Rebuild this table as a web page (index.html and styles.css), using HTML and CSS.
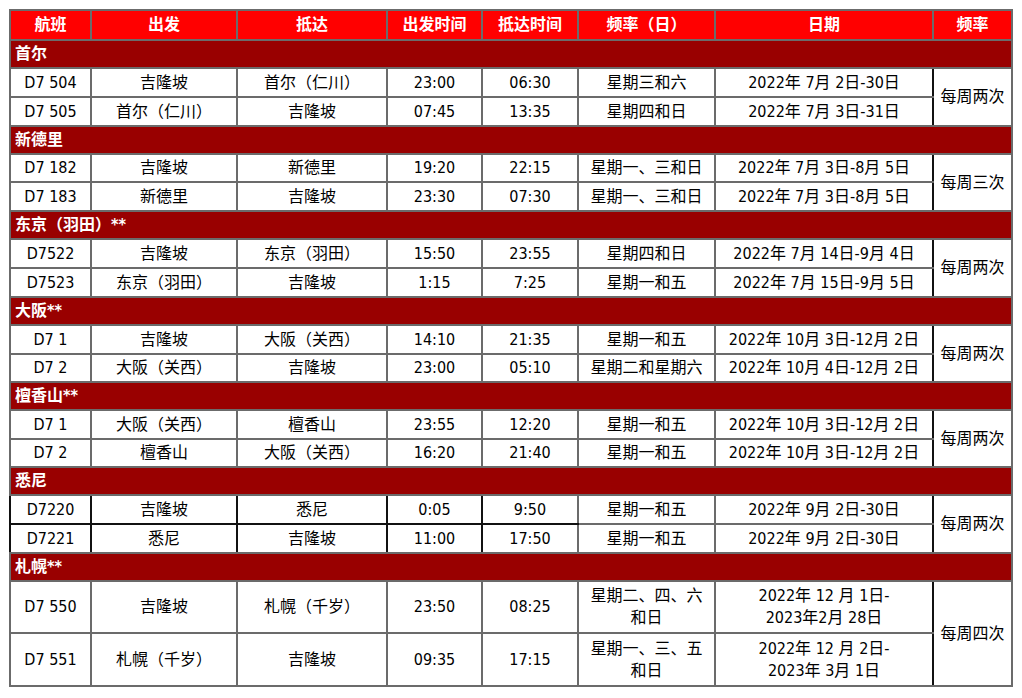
FILE: index.html
```html
<!DOCTYPE html>
<html lang="zh-CN">
<head>
<meta charset="utf-8">
<title>航班时刻表</title>
<link rel="stylesheet" href="styles.css">
</head>
<body>
<table class="sched">
  <colgroup>
    <col class="c1"><col class="c2"><col class="c3"><col class="c4"><col class="c5"><col class="c6"><col class="c7"><col class="c8">
  </colgroup>
  <thead>
    <tr class="head">
      <th>航班</th><th>出发</th><th>抵达</th><th>出发时间</th><th>抵达时间</th><th>频率（日）</th><th>日期</th><th>频率</th>
    </tr>
  </thead>
  <tbody>
    <tr class="grp"><td colspan="8">首尔</td></tr>
    <tr class="row r29"><td>D7 504</td><td>吉隆坡</td><td>首尔（仁川）</td><td>23:00</td><td>06:30</td><td>星期三和六</td><td class="date">2022年 7月 2日-30日</td><td class="freq" rowspan="2">每周两次</td></tr>
    <tr class="row r29"><td>D7 505</td><td>首尔（仁川）</td><td>吉隆坡</td><td>07:45</td><td>13:35</td><td>星期四和日</td><td class="date">2022年 7月 3日-31日</td></tr>

    <tr class="grp"><td colspan="8">新德里</td></tr>
    <tr class="row r28"><td>D7 182</td><td>吉隆坡</td><td>新德里</td><td>19:20</td><td>22:15</td><td>星期一、三和日</td><td class="date">2022年 7月 3日-8月 5日</td><td class="freq" rowspan="2">每周三次</td></tr>
    <tr class="row r29"><td>D7 183</td><td>新德里</td><td>吉隆坡</td><td>23:30</td><td>07:30</td><td>星期一、三和日</td><td class="date">2022年 7月 3日-8月 5日</td></tr>

    <tr class="grp"><td colspan="8">东京（羽田）**</td></tr>
    <tr class="row r29"><td>D7522</td><td>吉隆坡</td><td>东京（羽田）</td><td>15:50</td><td>23:55</td><td>星期四和日</td><td class="date">2022年 7月 14日-9月 4日</td><td class="freq" rowspan="2">每周两次</td></tr>
    <tr class="row r29"><td>D7523</td><td>东京（羽田）</td><td>吉隆坡</td><td>1:15</td><td>7:25</td><td>星期一和五</td><td class="date">2022年 7月 15日-9月 5日</td></tr>

    <tr class="grp"><td colspan="8">大阪**</td></tr>
    <tr class="row r29"><td>D7 1</td><td>吉隆坡</td><td>大阪（关西）</td><td>14:10</td><td>21:35</td><td>星期一和五</td><td class="date">2022年 10月 3日-12月 2日</td><td class="freq" rowspan="2">每周两次</td></tr>
    <tr class="row r28"><td>D7 2</td><td>大阪（关西）</td><td>吉隆坡</td><td>23:00</td><td>05:10</td><td>星期二和星期六</td><td class="date">2022年 10月 4日-12月 2日</td></tr>

    <tr class="grp"><td colspan="8">檀香山**</td></tr>
    <tr class="row r29"><td>D7 1</td><td>大阪（关西）</td><td>檀香山</td><td>23:55</td><td>12:20</td><td>星期一和五</td><td class="date">2022年 10月 3日-12月 2日</td><td class="freq" rowspan="2">每周两次</td></tr>
    <tr class="row r28"><td>D7 2</td><td>檀香山</td><td>大阪（关西）</td><td>16:20</td><td>21:40</td><td>星期一和五</td><td class="date">2022年 10月 3日-12月 2日</td></tr>

    <tr class="grp"><td colspan="8">悉尼</td></tr>
    <tr class="row r29 syd syd1"><td>D7220</td><td>吉隆坡</td><td>悉尼</td><td>0:05</td><td>9:50</td><td>星期一和五</td><td class="date">2022年 9月 2日-30日</td><td class="freq" rowspan="2">每周两次</td></tr>
    <tr class="row r29 syd syd2"><td>D7221</td><td>悉尼</td><td>吉隆坡</td><td>11:00</td><td>17:50</td><td>星期一和五</td><td class="date">2022年 9月 2日-30日</td></tr>

    <tr class="grp"><td colspan="8">札幌**</td></tr>
    <tr class="row tall"><td>D7 550</td><td>吉隆坡</td><td>札幌（千岁）</td><td>23:50</td><td>08:25</td><td>星期二、四、六<br>和日</td><td class="date">2022年 12 月 1日-<br>2023年2月 28日</td><td class="freq" rowspan="2">每周四次</td></tr>
    <tr class="row tall2"><td>D7 551</td><td>札幌（千岁）</td><td>吉隆坡</td><td>09:35</td><td>17:15</td><td>星期一、三、五<br>和日</td><td class="date">2022年 12 月 2日-<br>2023年 3月 1日</td></tr>
  </tbody>
</table>
</body>
</html>
```
FILE: styles.css
```css
html, body {
  margin: 0;
  padding: 0;
  background: #ffffff;
}

body {
  font-family: "DejaVu Sans Condensed", "DejaVu Sans", "Noto Sans CJK SC", sans-serif;
  font-stretch: condensed;
  font-size: 16px;
  color: #000000;
}

.sched {
  margin: 9px 0 0 9px;
  width: 1004px;
  table-layout: fixed;
  border-collapse: collapse;
  border: 2px solid #6b6b6b;
}

.c1 { width: 81px; }
.c2 { width: 146px; }
.c3 { width: 150px; }
.c4 { width: 95px; }
.c5 { width: 96px; }
.c6 { width: 137px; }
.c7 { width: 218px; }
.c8 { width: 79px; }

.sched th,
.sched td {
  border: 2px solid #6b6b6b;
  padding: 0 3px;
  line-height: 20px;
  text-align: center;
  vertical-align: middle;
  white-space: nowrap;
  overflow: hidden;
}

.head { height: 30px; }
.head th {
  background: #ff0000;
  color: #ffffff;
  font-weight: bold;
}

.grp { height: 28px; }
.grp td {
  background: #990000;
  color: #ffffff;
  font-weight: bold;
  text-align: left;
  padding-left: 4px;
}

.r29 { height: 29px; }
.r28 { height: 28px; }
.tall { height: 52px; }
.tall2 { height: 53px; }
.tall td,
.tall2 td {
  line-height: 22px;
}

.sched td.date {
  border-right-color: #111111;
}

.sched td.freq {
  border-left-color: #111111;
}

.syd td:nth-child(-n+4) {
  border-left-color: #111111;
  border-right-color: #111111;
}
.syd td:nth-child(5) {
  border-left-color: #111111;
}
.syd1 td:nth-child(-n+5) {
  border-bottom-color: #111111;
}
.syd2 td {
  border-bottom-color: #6b6b6b;
}
```
